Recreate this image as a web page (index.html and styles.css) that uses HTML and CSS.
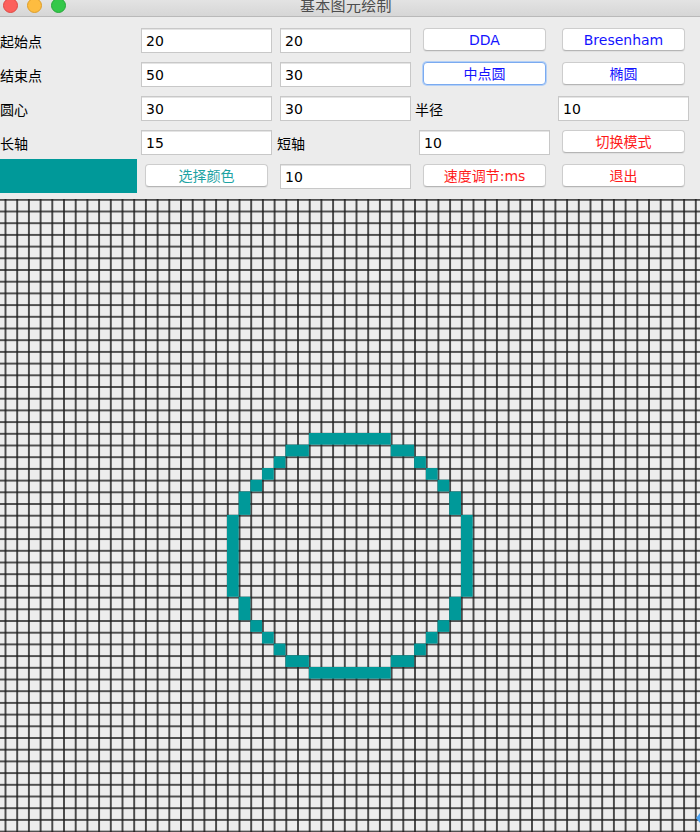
FILE: index.html
```html
<!DOCTYPE html>
<html lang="zh">
<head>
<meta charset="utf-8">
<title>基本图元绘制</title>
<link rel="stylesheet" href="styles.css">
</head>
<body>
<div class="window">
  <div class="titlebar">
    <div class="lights">
      <span class="light red"></span>
      <span class="light yellow"></span>
      <span class="light green"></span>
    </div>
    <div class="title">基本图元绘制</div>
  </div>
  <div class="panel">
    <div class="form">
      <div class="label">起始点</div>
      <input class="field" type="text" value="20">
      <input class="field" type="text" value="20">
      <button class="btn blue">DDA</button>
      <button class="btn blue">Bresenham</button>

      <div class="label">结束点</div>
      <input class="field" type="text" value="50">
      <input class="field" type="text" value="30">
      <button class="btn blue focus">中点圆</button>
      <button class="btn blue">椭圆</button>

      <div class="label">圆心</div>
      <input class="field" type="text" value="30">
      <input class="field" type="text" value="30">
      <div class="label label-c4">半径</div>
      <input class="field" type="text" value="10">

      <div class="label">长轴</div>
      <input class="field" type="text" value="15">
      <div class="label label-c3">短轴</div>
      <input class="field" type="text" value="10">
      <button class="btn red">切换模式</button>

      <div class="swatch"></div>
      <button class="btn teal">选择颜色</button>
      <input class="field" type="text" value="10">
      <button class="btn red">速度调节:ms</button>
      <button class="btn red">退出</button>
    </div>
  </div>
  <div class="canvas">
    <svg class="grid" width="700" height="633" viewBox="0 0 700 633">
      <defs>
        <pattern id="cells" width="1" height="1" patternUnits="userSpaceOnUse" x="0.5" y="0.5">
          <rect width="1" height="1" fill="#ededed"/>
          <path d="M0.5 0V1M0 0.5H1" stroke="#1c1c1c" stroke-width="0.13"/>
        </pattern>
      </defs>
      <g transform="translate(-6.2 0.8) scale(11.7)">
        <rect x="0" y="-0.07" width="61" height="55" fill="url(#cells)"/>
        <g fill="#009999" transform="translate(-0.07 -0.07)">
          <rect x="27" y="20" width="7" height="1"/>
          <rect x="25" y="21" width="2" height="1"/>
          <rect x="34" y="21" width="2" height="1"/>
          <rect x="24" y="22" width="1" height="1"/>
          <rect x="36" y="22" width="1" height="1"/>
          <rect x="23" y="23" width="1" height="1"/>
          <rect x="37" y="23" width="1" height="1"/>
          <rect x="22" y="24" width="1" height="1"/>
          <rect x="38" y="24" width="1" height="1"/>
          <rect x="21" y="25" width="1" height="2"/>
          <rect x="39" y="25" width="1" height="2"/>
          <rect x="20" y="27" width="1" height="7"/>
          <rect x="40" y="27" width="1" height="7"/>
          <rect x="21" y="34" width="1" height="2"/>
          <rect x="39" y="34" width="1" height="2"/>
          <rect x="22" y="36" width="1" height="1"/>
          <rect x="38" y="36" width="1" height="1"/>
          <rect x="23" y="37" width="1" height="1"/>
          <rect x="37" y="37" width="1" height="1"/>
          <rect x="24" y="38" width="1" height="1"/>
          <rect x="36" y="38" width="1" height="1"/>
          <rect x="25" y="39" width="2" height="1"/>
          <rect x="34" y="39" width="2" height="1"/>
          <rect x="27" y="40" width="7" height="1"/>
        </g>
      </g>
    </svg>
    <div class="marker"></div>
  </div>
</div>
</body>
</html>
```
FILE: styles.css
```css
html, body {
  margin: 0;
  padding: 0;
  background: #ececec;
  overflow: hidden;
}

.window {
  width: 700px;
  height: 832px;
  display: flex;
  flex-direction: column;
  font-family: "DejaVu Sans", "Noto Sans CJK SC", sans-serif;
  font-size: 14px;
  color: #000;
  position: relative;
}

.titlebar {
  height: 16px;
  flex: none;
  display: flex;
  align-items: flex-start;
  background: linear-gradient(#e3e3e3, #d6d6d6);
  border-bottom: 1px solid #b9b9b9;
  overflow: hidden;
}

.lights {
  display: flex;
  gap: 9px;
  padding-left: 3px;
  margin-top: -2px;
}

.light {
  width: 13px;
  height: 13px;
  border-radius: 50%;
  display: block;
}

.red { }
.light.red { background: #fc605c; border: 0.5px solid #de4a44; }
.light.yellow { background: #fdbc40; border: 0.5px solid #dd9e2a; }
.light.green { background: #34c84a; border: 0.5px solid #27a83a; }

.title {
  margin-left: 234px;
  margin-top: -4px;
  font-family: "Noto Sans CJK SC", sans-serif;
  font-size: 15px;
  line-height: 17px;
  color: #4d4d4d;
  letter-spacing: 0.3px;
}

.panel {
  flex: none;
  padding-top: 6px;
  padding-bottom: 6px;
}

.form {
  display: grid;
  grid-template-columns: repeat(5, 139px);
  grid-template-rows: repeat(5, 34px);
}

.label {
  align-self: center;
  font-family: "Noto Sans CJK SC", sans-serif;
  font-size: 14px;
  line-height: 20px;
  margin-top: 1px;
}

.label-c3 { margin-left: -1px; }
.label-c4 { margin-left: -2px; }

.field {
  box-sizing: border-box;
  width: 131px;
  height: 25px;
  margin: 5px 0 0 2px;
  align-self: start;
  padding: 0 0 0 4px;
  border: 1px solid #c8c8c8;
  box-shadow: inset 0 1px 0 #e4e4e4;
  background: #fff;
  font-family: "DejaVu Sans", "Noto Sans CJK SC", sans-serif;
  font-size: 14px;
  color: #000;
  outline: none;
}

.btn {
  box-sizing: border-box;
  width: 123px;
  height: 23px;
  margin: 5px 0 0 6px;
  align-self: start;
  padding: 0;
  border: 1px solid #cdcdcd;
  border-bottom-color: #b5b5b5;
  border-radius: 4px;
  background: #fff;
  box-shadow: 0 1px 1px rgba(0, 0, 0, 0.06);
  font-family: "DejaVu Sans", "Noto Sans CJK SC", sans-serif;
  font-size: 14px;
  line-height: 20px;
  text-align: center;
}

.btn.blue { color: #1414ff; }
.btn.red { color: #ff1a1a; }
.btn.teal { color: #1ea3a3; }

.btn.focus {
  border: 1px solid #7aaaf0;
  box-shadow: 0 0 0 1px #b4d0f6;
}

.swatch {
  width: 137px;
  height: 34px;
  background: #009999;
}

.canvas {
  flex: none;
  height: 633px;
  position: relative;
}

.grid {
  display: block;
}

.marker {
  position: absolute;
  right: 0;
  top: 614px;
  width: 0;
  height: 0;
  border-top: 5px solid transparent;
  border-bottom: 5px solid transparent;
  border-right: 4px solid #4aa0f0;
}
```
